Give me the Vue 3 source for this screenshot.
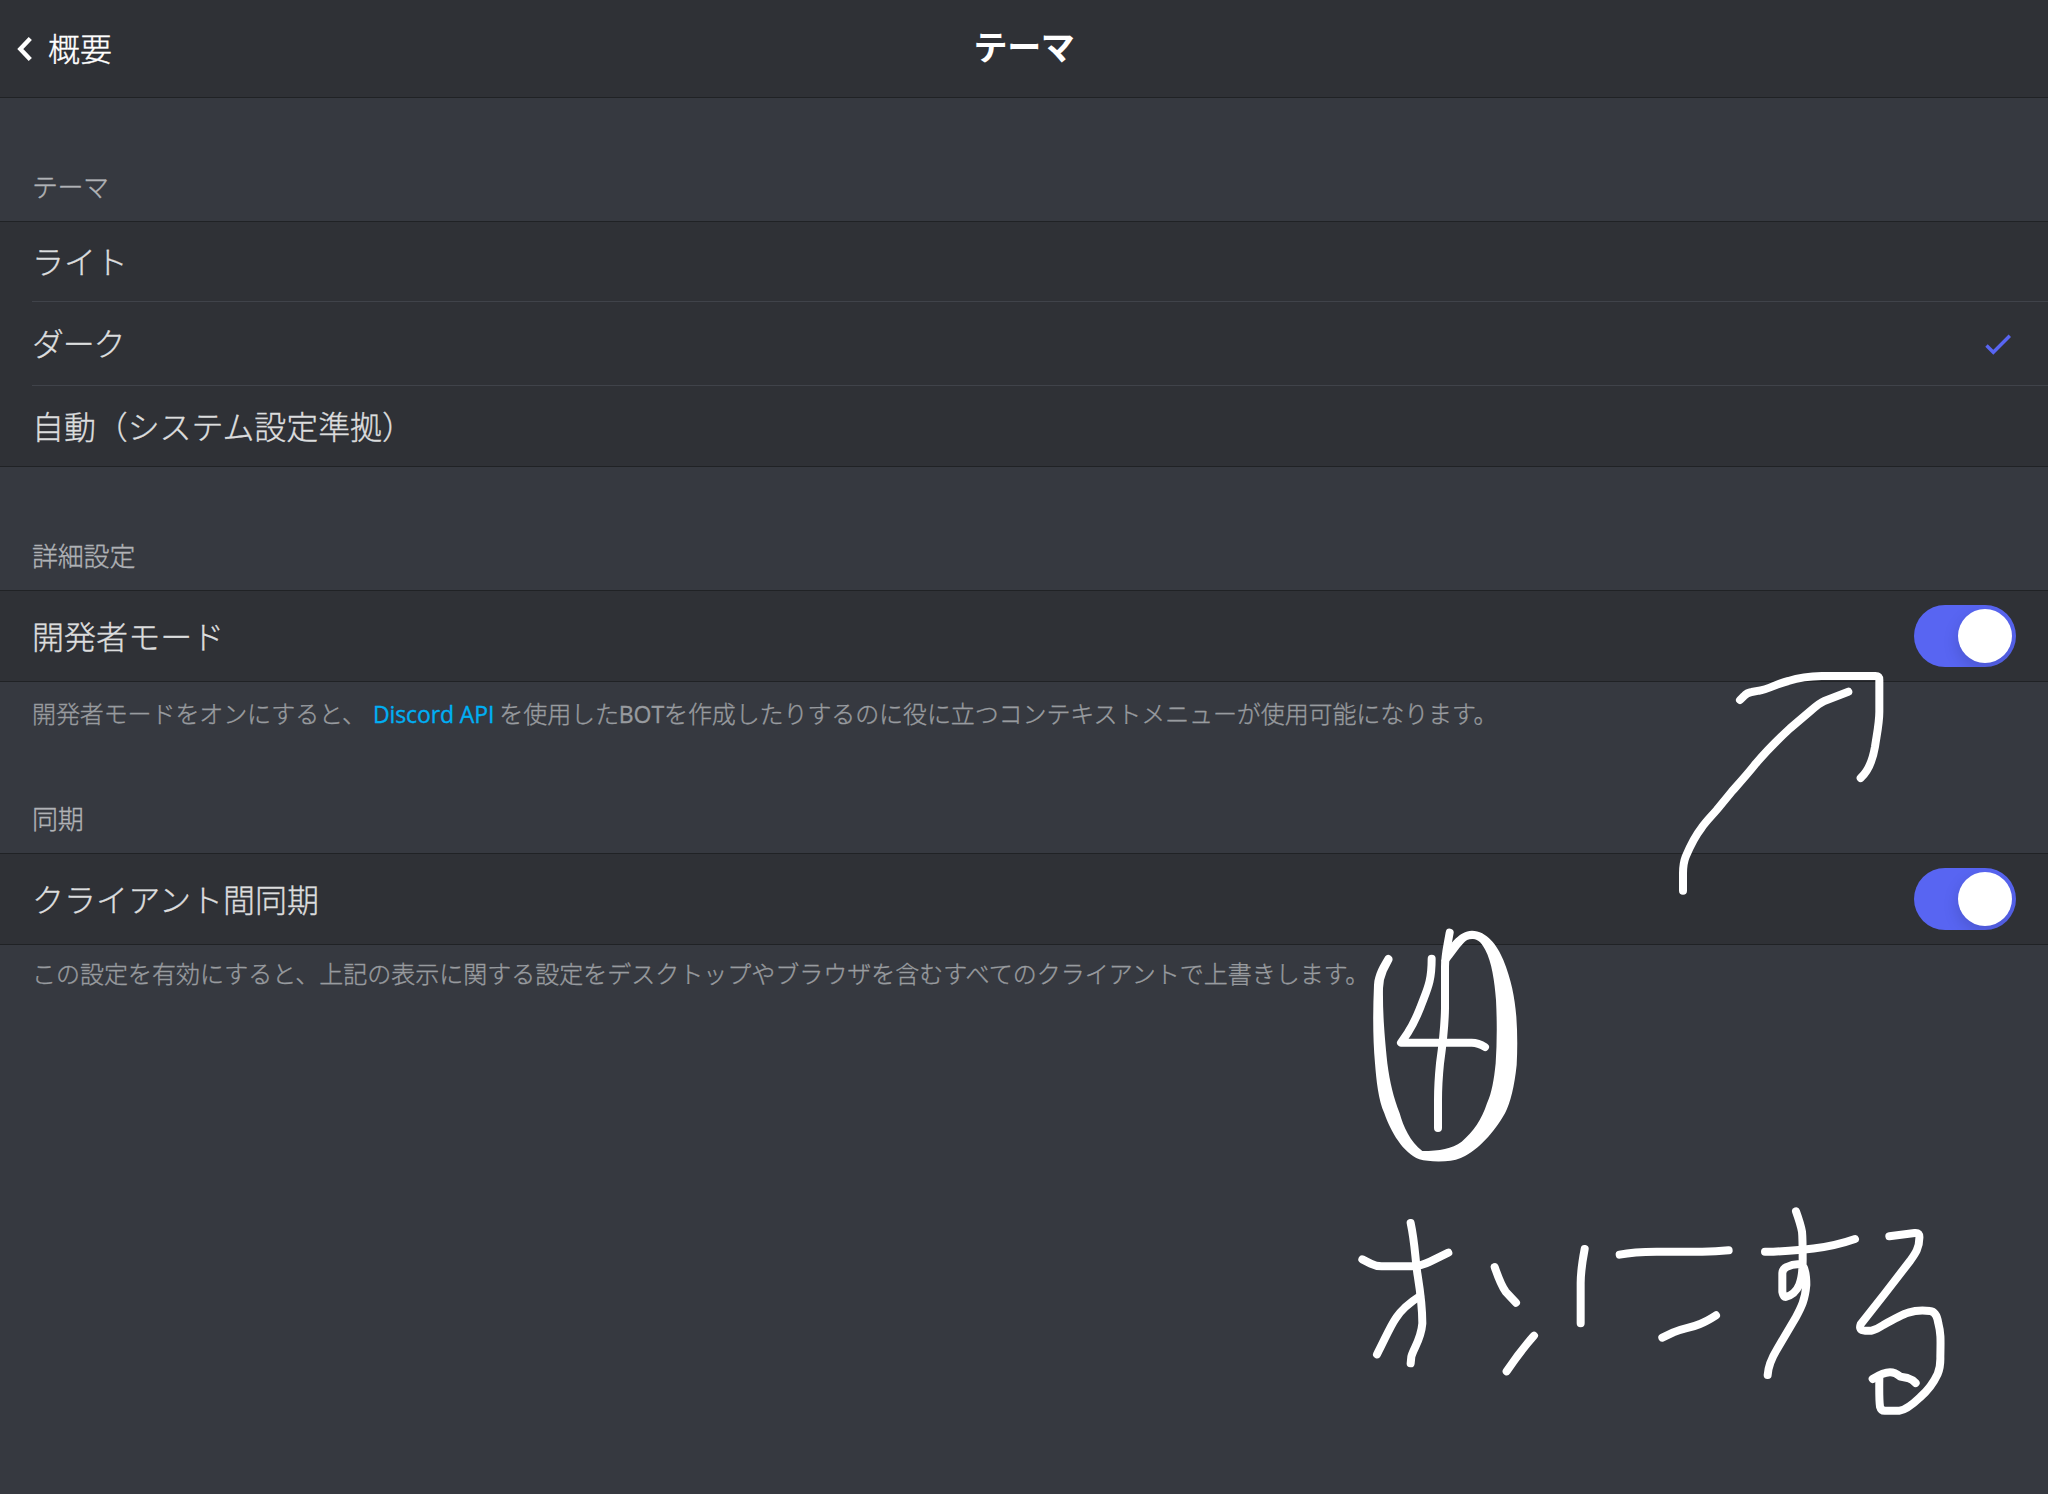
<script setup>
const themes = [
  { name: 'ライト', selected: false },
  { name: 'ダーク', selected: true, tight: true },
  { name: '自動（システム設定準拠）', selected: false },
]
</script>

<template>
  <div class="screen">
    <header class="nav">
      <div class="back">
        <svg class="chevron" width="18" height="28" viewBox="0 0 18 28">
          <path d="M14.3 3.4 4.3 13.9 14.3 24.4" />
        </svg>
        <span>概要</span>
      </div>
      <h1 class="title">テーマ</h1>
    </header>

    <main>
      <section>
        <h2 class="label first">テーマ</h2>
        <div class="group">
          <div v-for="t in themes" :key="t.name" class="row option">
            <span class="name" :class="{ tight: t.tight }">{{ t.name }}</span>
            <svg v-if="t.selected" class="check" width="32" height="28" viewBox="0 0 32 28">
              <path d="M4.5 15.5 11.3 22.3 27.8 5.8" />
            </svg>
          </div>
        </div>
      </section>

      <section>
        <h2 class="label second">詳細設定</h2>
        <div class="group">
          <div class="row switch-row">
            <span class="name">開発者モード</span>
            <span class="toggle"><i class="knob"></i></span>
          </div>
        </div>
        <p class="note"><span>開発者モードをオンにすると、</span><a>Discord API</a><span>を使用した<b>BOT</b>を作成したりするのに役に立つコンテキストメニューが使用可能になります。</span></p>
      </section>

      <section>
        <h2 class="label third">同期</h2>
        <div class="group">
          <div class="row switch-row">
            <span class="name">クライアント間同期</span>
            <span class="toggle"><i class="knob"></i></span>
          </div>
        </div>
        <p class="note last">この設定を有効にすると、上記の表示に関する設定をデスクトップやブラウザを含むすべてのクライアントで上書きします。</p>
      </section>
    </main>

    <svg class="ink" width="2048" height="1494" viewBox="0 0 6144 4482">
      <!-- arrow -->
      <g transform="translate(4980 1740)">
        <path d="M69 932V880Q69 850 77 830Q100 775 125 743C140 722 152 711 170 690L215 635C240 607 262 583 288 550C320 512 350 482 390 445L450 394Q480 368 493 363L565 335" />
        <path d="M240 360 251 349Q261 338 275 336L297 332C325 328 350 311 385 303Q430 289 485 288H646Q658 288 658 300V395C658 430 650 465 645 500Q634 565 602 594" />
      </g>
      <!-- circled four -->
      <g transform="translate(4050 2700)">
        <path d="M245 176C245 250 230 270 210 325Q192 370 173 399L153 428H365Q385 428 405 441" />
        <path d="M299 98C290 150 285 165 285 200V325C284 390 277 440 270 490Q264 550 264 600V684" />
        <path class="fill" d="M127 182Q130 172 122 167Q112 161 106 169C92 192 74 222 72 255Q66 390 75 490C79 540 85 600 103 640C122 695 160 760 208 778Q235 786 285 784Q320 782 345 768C395 742 440 685 465 640Q490 590 500 495Q504 420 499 350C494 290 484 240 460 180C442 135 410 93 366 92C325 95 305 130 288 150L273 184 295 187C310 170 325 145 340 130Q350 116 369 117C385 117 398 133 406 150C425 185 434 245 438 300Q443 400 437 490C432 540 425 580 411 610C395 660 370 695 335 725C305 747 270 752 217 753C180 725 160 680 149 640C130 590 120 550 112 490C103 400 98 340 99 265Q99 240 110 215Z" />
      </g>
      <!-- handwriting -->
      <g transform="translate(4020 3570)">
        <path d="M67 208 92 221Q108 229 125 229H215Q242 229 270 215L325 188" />
        <path d="M212 99C225 160 225 200 232 250C240 300 247 340 247 400C243 450 220 475 214 500L212 520" />
        <path d="M240 318Q190 350 168 384C150 410 135 447 111 493" />
        <path d="M464 231Q482 284 497 305L528 338" />
        <path d="M582 437Q541 483 500 544" />
        <path d="M734 177Q722 240 722 280V400" />
        <path d="M839 194Q880 185 950 185H1070Q1120 186 1166 181" />
        <path d="M967 443 1000 427C1030 414 1050 415 1080 402Q1100 394 1128 376" />
      </g>
      <g transform="translate(4920 3570)">
        <path d="M375 185H400C480 181 560 177 645 147" />
        <path d="M468 64Q482 103 486 125Q488 145 488 210C488 270 478 310 437 321Q430 321 427 305V250Q428 236 440 231Q465 219 485 224Q499 235 499 285C495 330 485 350 466 385L412 476Q385 520 383 555" />
        <path d="M748 139 824 129Q840 127 838 145C838 175 825 192 810 213L735 310 662 403Q655 422 675 422H695Q710 418 730 405Q785 374 805 368Q835 358 870 363Q890 365 895 400C903 430 902 450 901 500Q902 530 893 552C880 580 860 605 840 622Q800 660 778 662H740Q724 665 720 650Q717 630 718 562" />
        <path d="M698 567Q730 547 750 547Q765 547 781 560L803 564Q817 568 827 579" />
      </g>
    </svg>
  </div>
</template>

<style>
body {
  margin: 0;
  background: #363840;
}
</style>

<style scoped>
.screen {
  position: relative;
  width: 2048px;
  height: 1494px;
  overflow: hidden;
  background: #363940;
  color: #dcddde;
  font-family: "Noto Sans CJK JP", sans-serif;
  font-weight: 300;
  -webkit-text-stroke: 0.35px currentColor;
}
.nav {
  display: grid;
  grid-template-columns: 1fr auto 1fr;
  align-items: center;
  box-sizing: border-box;
  height: 98px;
  border-bottom: 1px solid #202225;
  background: #2f3136;
  color: #fff;
}
.back {
  display: flex;
  align-items: center;
  gap: 14px;
  padding-left: 16px;
  font-size: 32px;
  line-height: 48px;
}
.back span {
  margin-bottom: 3px;
}
.chevron path {
  fill: none;
  stroke: #fff;
  stroke-width: 4.4;
}
.title {
  margin: 0 0 5px;
  font-size: 34px;
  line-height: 48px;
  font-weight: 700;
  letter-spacing: -0.3px;
  -webkit-text-stroke: 0;
}
.label {
  display: flex;
  align-items: flex-end;
  box-sizing: border-box;
  margin: 0;
  padding: 0 32px 16px;
  font-size: 26px;
  line-height: 38px;
  letter-spacing: -0.2px;
  font-weight: 300;
  color: #b0b2b6;
}
.first {
  height: 123px;
  letter-spacing: -0.5px;
}
.second {
  height: 123px;
}
.third {
  height: 106px;
}
.group {
  border: solid #202225;
  border-width: 1px 0;
  background: #2f3136;
}
.row {
  display: flex;
  align-items: center;
  justify-content: space-between;
  margin-left: 32px;
  font-size: 32px;
}
.name {
  margin-bottom: 3px;
  letter-spacing: -0.1px;
}
.switch-row .name {
  letter-spacing: 0.05px;
}
.name.tight {
  letter-spacing: -1.2px;
}
.option {
  height: 79px;
  padding-right: 34px;
}
.option + .option {
  height: 83px;
  border-top: 1px solid #40434a;
}
.option:last-child {
  height: 80px;
}
.check path {
  fill: none;
  stroke: #5865f2;
  stroke-width: 3.4;
}
.switch-row {
  height: 90px;
  padding-right: 32px;
}
.toggle {
  display: flex;
  justify-content: flex-end;
  box-sizing: border-box;
  width: 102px;
  height: 62px;
  padding: 4px;
  border-radius: 31px;
  overflow: hidden;
  background: #5865f2;
}
.knob {
  width: 54px;
  height: 54px;
  border-radius: 50%;
  background: #fff;
  box-shadow: 0 6px 16px rgba(0, 0, 0, 0.15);
}
.note {
  display: flex;
  box-sizing: border-box;
  height: 65px;
  margin: 0;
  padding: 13px 32px 0;
  font-size: 24px;
  line-height: 35px;
  letter-spacing: -0.1px;
  white-space: nowrap;
  color: #989b9f;
}
.note a {
  margin: 2px 5px 0 7px;
  font-family: "Open Sans", sans-serif;
  font-size: 23px;
  font-weight: 400;
  color: #00aff4;
}
.note b {
  font-family: "Open Sans", sans-serif;
  font-size: 23px;
  font-weight: 400;
}
.last {
  padding-top: 10px;
  letter-spacing: 0;
}
.ink {
  position: absolute;
  inset: 0;
  pointer-events: none;
}
.ink path {
  fill: none;
  stroke: #fff;
  stroke-width: 24;
  stroke-linecap: round;
  stroke-linejoin: round;
}
.ink .fill {
  fill: #fff;
  stroke: none;
}
</style>
